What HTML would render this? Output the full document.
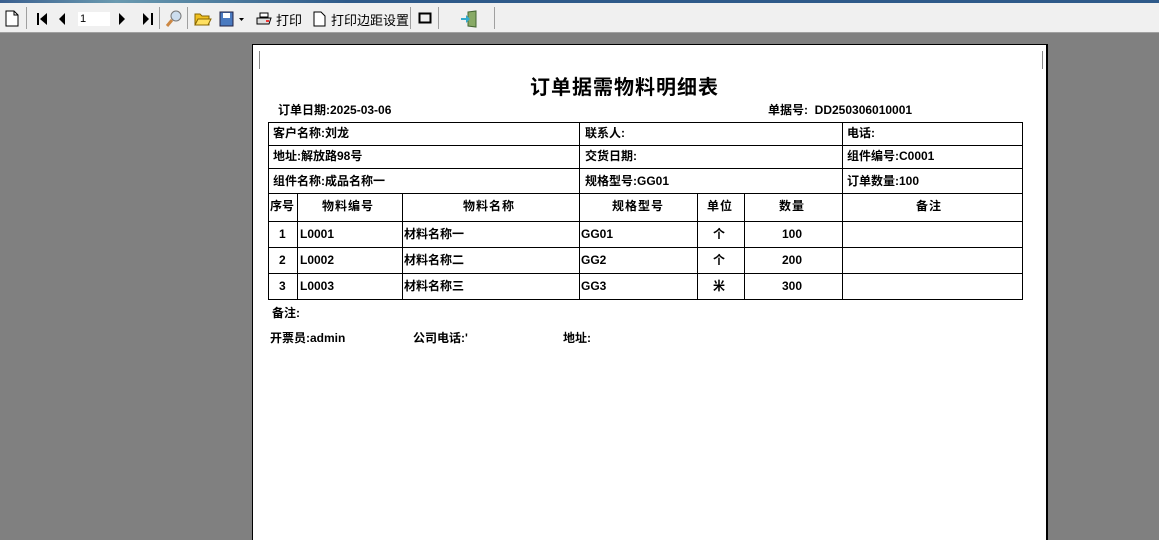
<html><head><style>
html,body{margin:0;width:1159px;height:540px;overflow:hidden}
body{background:#808080;position:relative;font-family:"Liberation Sans","Noto Sans CJK SC",sans-serif;}
.tb{position:absolute;left:0;top:0;width:1159px;height:32px;background:#f0f0f0;border-bottom:1px solid #a0a0a0}
.tb .blue{position:absolute;left:0;top:0;width:1159px;height:3px;background:linear-gradient(90deg,#3a5f8f,#6a9ab0 10%,#2e5a8a 30%,#2e5a8a)}
.sep{position:absolute;top:7px;width:1px;height:22px;background:#a0a0a0}
.t{position:absolute;top:10px;font-size:13px;color:#000}
.page{position:absolute;left:252px;top:44px;width:793px;height:520px;background:#fff;border:1px solid #000;border-right:2px solid #000}
.a{position:absolute;font-size:12px;line-height:14px;font-weight:bold;color:#000;white-space:nowrap}
.h{position:absolute;background:#000;height:1px}
.v{position:absolute;background:#000;width:1px}
</style></head><body>
<div class="tb"><div class="blue"></div>
<svg style="position:absolute;left:5px;top:10px" width="14" height="17"><path d="M1 1h8l4 4v11H1z" fill="#fff" stroke="#000"/><path d="M9 1v4h4" fill="none" stroke="#000"/></svg>
<div class="sep" style="left:26px"></div>
<svg style="position:absolute;left:36px;top:12px" width="120" height="14"><rect x="1" y="1" width="2" height="12"/><path d="M11 1v12L4 7z"/><path d="M29 1v12L23 7z"/><path d="M83 1v12l6-6z"/><path d="M107 1v12l6-6z"/><rect x="115" y="1" width="2" height="12"/></svg>
<div style="position:absolute;left:78px;top:12px;width:30px;height:14px;background:#fff;font-size:11px;line-height:14px;padding-left:2px">1</div>
<div class="sep" style="left:159px"></div>
<svg style="position:absolute;left:165px;top:9px" width="18" height="18"><circle cx="11" cy="7" r="5" fill="#cde" stroke="#777"/><path d="M7 11l-5 6" stroke="#c84" stroke-width="3"/></svg>
<div class="sep" style="left:187px"></div>
<svg style="position:absolute;left:194px;top:12px" width="18" height="14"><path d="M1 2h5l2 2h7v9H1z" fill="#f0c020" stroke="#860"/><path d="M1 13l3-6h13l-3 6z" fill="#ffe060" stroke="#860"/></svg>
<svg style="position:absolute;left:219px;top:11px" width="26" height="16"><rect x="1" y="1" width="13" height="14" fill="#4a7ac0" stroke="#224"/><rect x="4" y="2" width="7" height="5" fill="#fff"/><path d="M20 7h5l-2.5 3z"/></svg>
<svg style="position:absolute;left:256px;top:12px" width="16" height="14"><path d="M4 1h8v4H4z" fill="#fff" stroke="#000"/><path d="M1 6h14l-2 6H1z" fill="#ddd" stroke="#000"/><rect x="10" y="8" width="3" height="2" fill="#e33"/></svg>
<div class="t" style="left:276px">打印</div>
<svg style="position:absolute;left:313px;top:11px" width="13" height="16"><path d="M1 1h7l4 4v10H1z" fill="#fff" stroke="#000"/></svg>
<div class="t" style="left:331px">打印边距设置</div>
<div class="sep" style="left:410px"></div>
<svg style="position:absolute;left:418px;top:12px" width="14" height="12"><rect x="1.5" y="1.5" width="11" height="9" fill="none" stroke="#000" stroke-width="2"/></svg>
<div class="sep" style="left:438px"></div>
<svg style="position:absolute;left:460px;top:10px" width="18" height="18"><path d="M8 2l8-1v16l-8-1z" fill="#8a6" stroke="#463"/><path d="M1 8h5V5l4 4-4 4v-3H1z" fill="#3ac"/></svg>
<div class="sep" style="left:494px"></div>
</div>
<div class="page">
<div class="v" style="left:6px;top:6px;height:18px;background:#888"></div>
<div class="v" style="left:789px;top:6px;height:18px;background:#888"></div>
</div>
<div class="a" style="left:530px;top:76px;font-size:20px;line-height:24px;letter-spacing:1px">订单据需物料明细表</div>
<div class="a" style="left:278px;top:103px">订单日期:2025-03-06</div>
<div class="a" style="left:768px;top:103px">单据号:&nbsp; DD250306010001</div>
<div class="h" style="left:268px;top:122px;width:755px"></div>
<div class="h" style="left:268px;top:145px;width:755px"></div>
<div class="h" style="left:268px;top:168px;width:755px"></div>
<div class="h" style="left:268px;top:193px;width:755px"></div>
<div class="h" style="left:268px;top:221px;width:755px"></div>
<div class="h" style="left:268px;top:247px;width:755px"></div>
<div class="h" style="left:268px;top:273px;width:755px"></div>
<div class="h" style="left:268px;top:299px;width:755px"></div>
<div class="v" style="left:268px;top:122px;height:178px"></div>
<div class="v" style="left:1022px;top:122px;height:178px"></div>
<div class="v" style="left:579px;top:122px;height:178px"></div>
<div class="v" style="left:842px;top:122px;height:178px"></div>
<div class="v" style="left:297px;top:193px;height:107px"></div>
<div class="v" style="left:402px;top:193px;height:107px"></div>
<div class="v" style="left:697px;top:193px;height:107px"></div>
<div class="v" style="left:744px;top:193px;height:107px"></div>
<div class="a" style="left:273px;top:126px">客户名称:刘龙</div>
<div class="a" style="left:585px;top:126px">联系人:</div>
<div class="a" style="left:847px;top:126px">电话:</div>
<div class="a" style="left:273px;top:149px">地址:解放路98号</div>
<div class="a" style="left:585px;top:149px">交货日期:</div>
<div class="a" style="left:847px;top:149px">组件编号:C0001</div>
<div class="a" style="left:273px;top:174px">组件名称:成品名称一</div>
<div class="a" style="left:585px;top:174px">规格型号:GG01</div>
<div class="a" style="left:847px;top:174px">订单数量:100</div>
<div class="a" style="left:270px;top:199px">序号</div>
<div class="a" style="left:322px;top:199px;letter-spacing:1px">物料编号</div>
<div class="a" style="left:463px;top:199px;letter-spacing:1px">物料名称</div>
<div class="a" style="left:612px;top:199px;letter-spacing:1px">规格型号</div>
<div class="a" style="left:707px;top:199px;letter-spacing:1px">单位</div>
<div class="a" style="left:779px;top:199px;letter-spacing:1px">数量</div>
<div class="a" style="left:916px;top:199px;letter-spacing:1px">备注</div>
<div class="a" style="left:279px;top:227px">1</div><div class="a" style="left:300px;top:227px">L0001</div><div class="a" style="left:404px;top:227px">材料名称一</div><div class="a" style="left:581px;top:227px">GG01</div><div class="a" style="left:713px;top:227px">个</div><div class="a" style="left:782px;top:227px">100</div>
<div class="a" style="left:279px;top:253px">2</div><div class="a" style="left:300px;top:253px">L0002</div><div class="a" style="left:404px;top:253px">材料名称二</div><div class="a" style="left:581px;top:253px">GG2</div><div class="a" style="left:713px;top:253px">个</div><div class="a" style="left:782px;top:253px">200</div>
<div class="a" style="left:279px;top:279px">3</div><div class="a" style="left:300px;top:279px">L0003</div><div class="a" style="left:404px;top:279px">材料名称三</div><div class="a" style="left:581px;top:279px">GG3</div><div class="a" style="left:713px;top:279px">米</div><div class="a" style="left:782px;top:279px">300</div>
<div class="a" style="left:272px;top:306px">备注:</div>
<div class="a" style="left:270px;top:331px">开票员:admin</div>
<div class="a" style="left:413px;top:331px">公司电话:'</div>
<div class="a" style="left:563px;top:331px">地址:</div>
</body></html>
